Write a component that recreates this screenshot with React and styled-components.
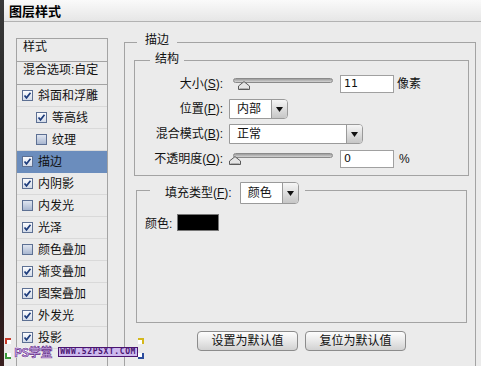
import React from 'react';
import styled, { createGlobalStyle } from 'styled-components';

const Global = createGlobalStyle`
  html, body { margin: 0; padding: 0; background: #ebebeb; }
  body {
    font-family: "Liberation Sans", "Noto Sans CJK SC", sans-serif;
    font-size: 12px;
    color: #111;
  }
  #root { width: 481px; height: 366px; overflow: hidden; }
`;

const Screen = styled.div`
  position: relative;
  display: flex;
  width: 481px;
  height: 366px;
  overflow: hidden;
  background: #ebebeb;
`;

const DarkEdge = styled.div`
  width: 4px;
  flex: none;
  background: linear-gradient(#3a3a3a, #141414 60%, #3a2020);
`;

const Window = styled.div`
  flex: 1;
  display: flex;
  flex-direction: column;
  min-width: 0;
`;

const TitleBar = styled.div`
  height: 22px;
  box-sizing: border-box;
  border-bottom: 1px solid #b2b2b2;
  background: linear-gradient(#fafafa, #e6e6e6);
  padding-left: 5px;
  font-weight: bold;
  font-size: 13px;
  line-height: 23px;
  color: #000;
`;

const Body = styled.div`
  display: flex;
  align-items: flex-start;
  padding: 11px 0 0 12px;
`;

const StyleList = styled.div`
  width: 92px;
  height: 400px;
  flex: none;
  margin-top: 5px;
  box-sizing: border-box;
  border: 1px solid #a3a3a3;
  display: flex;
  flex-direction: column;
`;

const ListHeader = styled.div`
  height: 23px;
  box-sizing: border-box;
  border-bottom: 1px solid #a3a3a3;
  padding-left: 6px;
  line-height: 16px;
  white-space: nowrap;
`;

const ListItem = styled.div`
  height: 22px;
  box-sizing: border-box;
  display: flex;
  align-items: center;
  gap: 5px;
  padding-left: ${p => (p.$indent ? 19 : 5)}px;
  border-bottom: 1px solid ${p => (p.$active ? '#6b8dbd' : '#d9d9d9')};
  background: ${p => (p.$active ? '#6b8dbd' : 'transparent')};
  line-height: 12px;
  white-space: nowrap;
`;

const Box = styled.span`
  width: 11px;
  height: 11px;
  flex: none;
  box-sizing: border-box;
  border: 1px solid #5d7093;
  background: ${p =>
    p.$checked
      ? 'linear-gradient(#fbfcfe, #d3dbe9)'
      : 'linear-gradient(#dfe5f0, #a9b7d0)'};
  display: flex;
  align-items: center;
  justify-content: center;
`;

const Check = ({ checked }) => (
  <Box $checked={checked}>
    {checked && (
      <svg width="9" height="9" viewBox="0 0 9 9">
        <path d="M1.5 4.5 L3.5 6.8 L7.5 1.8" fill="none" stroke="#1d3c7c" strokeWidth="1.7" />
      </svg>
    )}
  </Box>
);

const Group = styled.fieldset`
  margin: ${p => p.$margin || '0'};
  padding: ${p => p.$padding || '0'};
  border: 1px solid #a3a3a3;
  width: ${p => p.$width}px;
  height: ${p => (p.$height ? `${p.$height}px` : 'auto')};
  box-sizing: border-box;
  min-width: 0;
  flex: none;
`;

const Legend = styled.legend`
  margin-left: ${p => p.$ml}px;
  padding: ${p => p.$pad};
  line-height: 14px;
  white-space: nowrap;
`;

const FillLegend = styled.legend`
  margin-left: 13px;
  padding: 0 6px 0 15px;
  height: 16px;
  line-height: 22px;
  white-space: nowrap;
`;

const Rows = styled.div`
  display: flex;
  flex-direction: column;
  gap: 5px;
`;

const Row = styled.div`
  height: 20px;
  display: flex;
  align-items: center;
`;

const Label = styled.span`
  width: 88px;
  flex: none;
  text-align: right;
  line-height: 16px;
  white-space: nowrap;
`;

const Key = styled.u`
  text-decoration: underline;
  text-underline-offset: 1px;
`;

const SliderBox = styled.div`
  position: relative;
  width: 100px;
  height: 20px;
  margin-left: 10px;
  flex: none;
`;

const Track = styled.div`
  position: absolute;
  left: 0;
  right: 0;
  top: 4px;
  height: 5px;
  box-sizing: border-box;
  border: 1px solid #8a8a8a;
  border-radius: 3px;
  background: linear-gradient(#9c9c9c, #d4d4d4);
`;

const Thumb = styled.svg`
  position: absolute;
  top: 7px;
`;

const Slider = ({ value }) => (
  <SliderBox>
    <Track />
    <Thumb width="12" height="9" viewBox="0 0 12 9" style={{ left: `${value}px` }}>
      <path d="M0.5 8.5 L0.5 5 L6 0.6 L11.5 5 L11.5 8.5 Z" fill="#e4e4e4" stroke="#5a5a5a" strokeWidth="1" />
      <path d="M1.5 7.5 L10.5 7.5" stroke="#b0b0b0" strokeWidth="1" />
    </Thumb>
  </SliderBox>
);

const NumInput = styled.div`
  width: 54px;
  height: 18px;
  margin-left: 7px;
  box-sizing: border-box;
  border: 1px solid #a0a0a0;
  background: #fff;
  padding-left: 3px;
  line-height: 16px;
  font-family: "DejaVu Sans", "Liberation Sans", sans-serif;
  font-size: 11px;
  flex: none;
`;

const Unit = styled.span`
  margin-left: ${p => p.$ml || 3}px;
  line-height: 16px;
`;

const Select = styled.span`
  display: inline-flex;
  vertical-align: top;
  width: ${p => p.$width}px;
  height: ${p => p.$height || 20}px;
  margin-left: ${p => p.$ml}px;
  box-sizing: border-box;
  border: 1px solid #9a9a9a;
  border-radius: 0 4px 4px 0;
  background: #fff;
  flex: none;
  overflow: hidden;
`;

const SelectText = styled.span`
  flex: 1;
  padding-left: 7px;
  line-height: ${p => (p.$height || 20) - 2}px;
`;

const SelectArrow = styled.span`
  width: 15px;
  flex: none;
  border-left: 1px solid #9a9a9a;
  background: linear-gradient(#f6f6f6, #c6c6c6);
  display: flex;
  align-items: center;
  justify-content: center;
`;

const Dropdown = ({ width, ml, height, children }) => (
  <Select $width={width} $ml={ml} $height={height}>
    <SelectText $height={height}>{children}</SelectText>
    <SelectArrow>
      <svg width="7" height="5" viewBox="0 0 7 5">
        <path d="M0 0 L7 0 L3.5 5 Z" fill="#111" />
      </svg>
    </SelectArrow>
  </Select>
);

const FillLabel = styled.span`
  display: inline-block;
  vertical-align: top;
  line-height: 22px;
`;

const ColorRow = styled.div`
  display: flex;
  align-items: center;
  height: 17px;
  padding-left: 8px;
`;

const Swatch = styled.div`
  width: 42px;
  height: 17px;
  margin-left: 5px;
  box-sizing: border-box;
  border: 1px solid #777;
  background: #000;
`;

const Buttons = styled.div`
  display: flex;
  gap: 7px;
  margin-top: 8px;
  padding-left: 72px;
`;

const Button = styled.div`
  width: 101px;
  height: 20px;
  box-sizing: border-box;
  border: 1px solid #8c8c8c;
  border-radius: 4px;
  background: linear-gradient(#fdfdfd, #e4e4e4 60%, #d2d2d2);
  text-align: center;
  line-height: 18px;
`;

const Watermark = styled.div`
  position: absolute;
  left: 5px;
  top: 338px;
  width: 139px;
  height: 21px;
  display: flex;
  align-items: center;
  gap: 6px;
  padding: 6px 0 0 9px;
  box-sizing: border-box;
`;

const Corner = styled.span`
  position: absolute;
  width: 4px;
  height: 4px;
  ${p => (p.$top ? 'top: 0;' : 'bottom: 0;')}
  ${p => (p.$left ? 'left: 0;' : 'right: 0;')}
  border: 0 solid ${p => p.$color};
  ${p => (p.$top ? 'border-top-width: 2px;' : 'border-bottom-width: 2px;')}
  ${p => (p.$left ? 'border-left-width: 2px;' : 'border-right-width: 2px;')}
  background: #fff;
`;

const WmTitle = styled.span`
  font-family: "Noto Sans CJK SC", sans-serif;
  font-weight: bold;
  font-size: 12px;
  line-height: 12px;
  letter-spacing: -0.3px;
  color: #cfb0ec;
  -webkit-text-stroke: 0.6px #5b1d82;
  text-shadow: 1px 0 #fff, -1px 0 #fff, 0 1px #fff, 0 -1px #fff;
`;

const WmUrl = styled.span`
  font-family: "DejaVu Sans Mono", monospace;
  font-weight: bold;
  font-size: 8px;
  line-height: 7px;
  height: 8px;
  padding: 0 1px;
  letter-spacing: 0.6px;
  color: #4a1470;
  background: #cdb9ee;
  border: 1px solid #4a1470;
`;

const items = [
  { label: '斜面和浮雕', checked: true },
  { label: '等高线', checked: true, indent: true },
  { label: '纹理', checked: false, indent: true },
  { label: '描边', checked: true, active: true },
  { label: '内阴影', checked: true },
  { label: '内发光', checked: false },
  { label: '光泽', checked: true },
  { label: '颜色叠加', checked: false },
  { label: '渐变叠加', checked: true },
  { label: '图案叠加', checked: true },
  { label: '外发光', checked: true },
  { label: '投影', checked: true },
];

export default function App() {
  return (
    <>
      <Global />
      <Screen>
        <DarkEdge />
        <Window>
          <TitleBar>图层样式</TitleBar>
          <Body>
            <StyleList>
              <ListHeader>样式</ListHeader>
              <ListHeader>混合选项:自定</ListHeader>
              {items.map(it => (
                <ListItem key={it.label} $indent={it.indent} $active={it.active}>
                  <Check checked={it.checked} />
                  <span>{it.label}</span>
                </ListItem>
              ))}
            </StyleList>
            <Group $width={352} $height={360} $margin="0 0 0 16px">
              <Legend $ml={12} $pad="0 8px 4px">描边</Legend>
              <Group $width={335} $margin="1px 0 0 9px" $padding="6px 0 6px 0">
                <Legend $ml={15} $pad="0 5px 2px">结构</Legend>
                <Rows>
                  <Row>
                    <Label>大小(<Key>S</Key>):</Label>
                    <Slider value={5} />
                    <NumInput>11</NumInput>
                    <Unit>像素</Unit>
                  </Row>
                  <Row>
                    <Label>位置(<Key>P</Key>):</Label>
                    <Dropdown width={59} ml={6}>内部</Dropdown>
                  </Row>
                  <Row>
                    <Label>混合模式(<Key>B</Key>):</Label>
                    <Dropdown width={134} ml={6}>正常</Dropdown>
                  </Row>
                  <Row>
                    <Label>不透明度(<Key>O</Key>):</Label>
                    <Slider value={-4} />
                    <NumInput>0</NumInput>
                    <Unit $ml={5}>%</Unit>
                  </Row>
                </Rows>
              </Group>
              <Group $width={331} $height={141} $margin="6px 0 0 11px" $padding="16px 0 0 0">
                <FillLegend>
                  <FillLabel>填充类型(<Key>F</Key>):</FillLabel>
                  <Dropdown width={59} ml={8} height={22}>颜色</Dropdown>
                </FillLegend>
                <ColorRow>
                  <span>颜色:</span>
                  <Swatch />
                </ColorRow>
              </Group>
              <Buttons>
                <Button>设置为默认值</Button>
                <Button>复位为默认值</Button>
              </Buttons>
            </Group>
          </Body>
        </Window>
        <Watermark>
          <Corner $top $left $color="#c83a2a" />
          <Corner $left $color="#3a9a3a" />
          <Corner $top $color="#d4b81c" />
          <Corner $color="#2c4c9c" />
          <WmTitle>PS学堂</WmTitle>
          <WmUrl>WWW.52PSXT.COM</WmUrl>
        </Watermark>
      </Screen>
    </>
  );
}
